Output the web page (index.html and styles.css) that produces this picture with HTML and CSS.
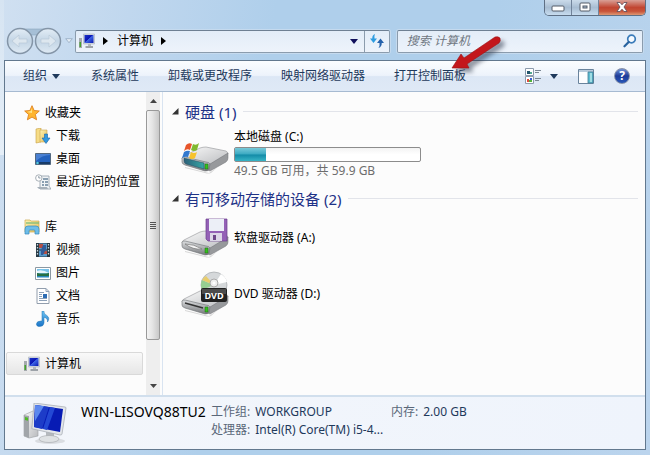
FILE: index.html
```html
<!DOCTYPE html>
<html lang="zh-CN">
<head>
<meta charset="utf-8">
<title>计算机</title>
<link rel="stylesheet" href="styles.css">
</head>
<body>
<svg class="defs" aria-hidden="true">
  <defs>
    <linearGradient id="screen" x1="0" y1="0" x2="1" y2="1">
      <stop offset="0" stop-color="#1a35c8"/><stop offset=".45" stop-color="#0a14b4"/><stop offset=".5" stop-color="#3f66e6"/><stop offset="1" stop-color="#0818b0"/>
    </linearGradient>
    <linearGradient id="metal" x1="0" y1="0" x2="1" y2="1">
      <stop offset="0" stop-color="#fafafa"/><stop offset="1" stop-color="#b9bbbe"/>
    </linearGradient>
    <linearGradient id="side" x1="0" y1="0" x2="0" y2="1">
      <stop offset="0" stop-color="#dcdee0"/><stop offset="1" stop-color="#77797c"/>
    </linearGradient>
    <linearGradient id="teal" x1="0" y1="0" x2="1" y2="0">
      <stop offset="0" stop-color="#2c5f78"/><stop offset="1" stop-color="#35a7a4"/>
    </linearGradient>
    <linearGradient id="folder" x1="0" y1="0" x2="1" y2="1">
      <stop offset="0" stop-color="#fdf3b4"/><stop offset="1" stop-color="#e5bd55"/>
    </linearGradient>
    <linearGradient id="blue" x1="0" y1="0" x2="0" y2="1">
      <stop offset="0" stop-color="#6cc3f2"/><stop offset="1" stop-color="#1b74c8"/>
    </linearGradient>
    <linearGradient id="orb" x1="0" y1="0" x2="0" y2="1">
      <stop offset="0" stop-color="#e3edf6"/><stop offset=".5" stop-color="#c3d5e5"/><stop offset="1" stop-color="#dfeaf4"/>
    </linearGradient>
    <symbol id="pc" viewBox="0 0 16 16">
      <path d="M0 5h3v10H0z" fill="#a5a9ae"/><path d="M.5 9H2v5H.5z" fill="#44a42c"/>
      <path d="M4.500 1h11v10h-11z" fill="#d8dde4" stroke="#a8b0ba" stroke-width=".6"/>
      <path d="M5.500 2h9v8h-9z" fill="url(#screen)"/>
      <path d="M9 11h3v2H9z" fill="#b3b8be"/><path d="M6.500 13h7.500v2H6.500z" fill="#9da2a8"/>
    </symbol>
    <symbol id="drive" viewBox="0 0 48 28">
      <path d="M4 21l24 6 19-13v-2L30 27q-3 1-6 0L4 22z" fill="#000" opacity=".15"/>
      <path d="M1 13q0-2 2-3L19 2q3-1 6-1l20 4q2 1 2 3L30 18q-2 1-5 1z" fill="url(#metal)" stroke="#909296" stroke-width=".6"/>
      <path d="M1 12q0-1 3-1l21 5q3 0 4 2v5q-1 2-5 2L4 19q-3-1-3-3z" fill="url(#side)" stroke="#6c6e72" stroke-width=".6"/>
      <path d="M29 18L47 7v5q0 2-2 4L29 25q-1 0-1-1z" fill="#97999c" stroke="#737579" stroke-width=".5"/>
      <path d="M24 18h3v5h-3z" fill="#35c01d" stroke="#1e6f14" stroke-width=".5"/>
    </symbol>
  </defs>
</svg>
<div class="window">
  <header class="chrome">
    <div class="caption">
      <button class="cap" aria-label="最小化"><svg width="14" height="7" viewBox="0 0 14 7"><rect x="1" y="1" width="12" height="5" rx="1" fill="#fff" stroke="#555c68"/></svg></button>
      <button class="cap" aria-label="最大化"><svg width="12" height="10" viewBox="0 0 12 10"><rect x="1" y="1" width="10" height="8" rx="1" fill="#fff" stroke="#555c68"/><rect x="4" y="4" width="4" height="2" fill="#a8bdd2" stroke="#555c68"/></svg></button>
      <button class="cap close" aria-label="关闭"><svg width="12" height="10" viewBox="0 0 12 10"><path d="M1 .500h3l2 2.300L8 .500h3L8 5l3 4.500H8L6 7.200 4 9.500H1l3-4.500z" fill="#fff" stroke="#5a4a55" stroke-width=".8"/></svg></button>
    </div>
    <div class="nav">
      <div class="orbs">
        <svg class="orbbg" width="56" height="28" viewBox="0 0 56 28">
          <path d="M14 2h28q-5 1-10 6h-8q-5-5-10-6z" fill="#a6bfd6" stroke="#8ba4bc" stroke-width=".6"/>
          <circle cx="14" cy="14" r="12.500" fill="url(#orb)" stroke="#8495a7" stroke-width="1.500"/><circle cx="42" cy="14" r="12.500" fill="url(#orb)" stroke="#8495a7" stroke-width="1.500"/>
          <path d="M6 14l7-6v4h8v4h-8v4zM50 14l-7-6v4h-8v4h8v4z" fill="#dde7ef" stroke="#b8c9d8" stroke-width=".7"/>
        </svg>
        <button class="orb" aria-label="后退"></button><button class="orb" aria-label="前进"></button>
      </div>
      <button class="recent" aria-label="最近页面"><svg width="8" height="6" viewBox="0 0 8 6"><path d="M.7.700h6.600L4 4.700z" fill="#e4edf5" stroke="#94aac0" stroke-width=".8"/></svg></button>
      <div class="address">
        <svg width="16" height="16"><use href="#pc"/></svg>
        <svg class="crumb" width="5" height="8" viewBox="0 0 5 8"><path d="M0 0l5 4-5 4z"/></svg>
        <a href="#">计算机</a>
        <svg class="crumb" width="5" height="8" viewBox="0 0 5 8"><path d="M0 0l5 4-5 4z"/></svg>
        <button class="drop" aria-label="历史记录"><svg width="8" height="5" viewBox="0 0 8 5"><path d="M0 0h8L4 5z" fill="#10105c"/></svg></button>
        <button class="refresh" aria-label="刷新"><svg width="16" height="14" viewBox="0 0 16 14"><path d="M6 0Q3 1 3.300 4.500H1L4.500 9 8 4.500H5.500Q5 2 6 0z" fill="#2d9ce0"/><path d="M9.500 14q3.500-1.500 3.200-5H15l-3.500-4.500L8 9h2.500q.5 3-1 5z" fill="#2562ac"/></svg></button>
      </div>
      <div class="search">
        <input type="text" aria-label="搜索 计算机" placeholder="搜索 计算机">
        <svg width="14" height="14" viewBox="0 0 14 14"><circle cx="8.500" cy="5" r="3.800" fill="#f5faff" stroke="#3b7cba" stroke-width="1.700"/><path d="M5.700 8L1.500 12.300" stroke="#28639f" stroke-width="2.200" stroke-linecap="round"/></svg>
      </div>
    </div>
  </header>
  <div class="client">
    <div class="toolbar" role="toolbar">
      <button class="org">组织<svg width="8" height="5" viewBox="0 0 8 5"><path d="M0 0h8L4 5z" fill="#1e395b"/></svg></button>
      <button>系统属性</button>
      <button>卸载或更改程序</button>
      <button>映射网络驱动器</button>
      <button class="panel">打开控制面板<svg class="pointer" width="60" height="42" viewBox="0 0 60 42" aria-hidden="true"><path d="M3 36L12 22l3 4L46 5q3-1 5 1 1 3-1 5L18 32l2 4z" fill="#c3171b" stroke="#9a1215" stroke-width=".6"/></svg></button>
      <div class="tools">
        <button class="view" aria-label="更改您的视图"><svg width="16" height="16" viewBox="0 0 16 16"><path d="M.5.500h8v7h-8zM.5 8.500h8v7h-8z" fill="#fff" stroke="#8c9bad"/><path d="M2 3h3v3H2z" fill="#22556c"/><path d="M5 4h2v2H5z" fill="#53a993"/><path d="M2 11h2v3H2z" fill="#e4483e"/><path d="M4 12h3v2H4z" fill="#50b23c"/><path d="M5 10h2v2H5z" fill="#3d60cd"/><path d="M10 2.500h6M10 4.500h4M10 10.500h6M10 12.500h4" stroke="#7a8794"/></svg><svg width="8" height="5" viewBox="0 0 8 5"><path d="M0 0h8L4 5z" fill="#1e395b"/></svg></button>
        <button aria-label="显示预览窗格"><svg width="16" height="15" viewBox="0 0 16 15"><path d="M.5.500h15v14H.5z" fill="#fcfdff" stroke="#69839c"/><path d="M1 1h14v2H1z" fill="#b9cbdc"/><path d="M10 3h5v11h-5z" fill="#5cbbd0" stroke="#437b94" stroke-width=".8"/><path d="M12 4h2v9h-2z" fill="#a0dde4"/></svg></button>
        <button class="help" aria-label="获取帮助">?</button>
      </div>
    </div>
    <div class="body">
      <nav class="sidebar">
        <ul>
          <li class="root"><svg width="16" height="16" viewBox="0 0 16 16"><path d="M8 .7l2.100 4.800 5.200.5-3.900 3.500 1.200 5.300L8 12.100l-4.600 2.700 1.200-5.300L.7 6l5.200-.5z" fill="#ffb52e" stroke="#df8220" stroke-width=".9"/><path d="M8 3v5L3 7l4-1z" fill="#ffe48b"/></svg><a href="#">收藏夹</a></li>
          <li><svg width="16" height="16" viewBox="0 0 16 16"><path d="M1 1l5-1v14l-5 1z" fill="#f6dc86" stroke="#c69e42" stroke-width=".6"/><path d="M5 2h7v12H5z" fill="url(#folder)" stroke="#cba650" stroke-width=".6"/><path d="M9.500 6h3v4H15l-4 5.500L7 10h2.500z" fill="#3199df" stroke="#1967ac" stroke-width=".6"/></svg><a href="#">下载</a></li>
          <li><svg width="16" height="16" viewBox="0 0 16 16"><path d="M.5 2.500h15v11H.5z" fill="#2462bd" stroke="#53687f"/><path d="M1 10Q7 4 15 4V3H1z" fill="#4a80d2"/><path d="M1 11h14v2H1z" fill="#173b68"/><circle cx="2.500" cy="12" r="1.300" fill="#53c7df"/></svg><a href="#">桌面</a></li>
          <li><svg width="16" height="16" viewBox="0 0 16 16"><path d="M5 2h9v10l2 3H5z" fill="#f1f4f6" stroke="#909da8" stroke-width=".8"/><path d="M8 5h5M7 8h2M10 8h3M7 11h2M10 11h3" stroke="#68839a" stroke-width="1.300"/><path d="M2 13h10l1 2H4z" fill="#a6b0b9"/><circle cx="3.800" cy="4" r="3.200" fill="#fff" stroke="#939da6" stroke-width=".8"/><path d="M3.800 2v2h1.700" fill="none" stroke="#637684" stroke-width=".7"/></svg><a href="#">最近访问的位置</a></li>
        </ul>
        <ul>
          <li class="root"><svg width="16" height="16" viewBox="0 0 16 16"><path d="M1 1h5l1 1h8v11H1z" fill="url(#folder)" stroke="#cca94e" stroke-width=".7"/><path d="M2 4h13" stroke="#74b877" stroke-width="1.200"/><path d="M1 15v-5q0-3 3-3h8q3 0 3 3v5h-4v-3q0-1-1-1H6q-1 0-1 1v3z" fill="#6dbde9" stroke="#368abd" stroke-width=".7"/></svg><a href="#">库</a></li>
          <li><svg width="16" height="16" viewBox="0 0 16 16"><path d="M1 1h14v14H1z" fill="#273844"/><path d="M4 1.500h8v6H4zM4 8.500h8v6H4z" fill="#5a9ccc"/><path d="M4 2h4v4H4zM8 9h4v3H8z" fill="#b44f45"/><path d="M8 3h3v4l-3 6H6V8z" fill="#315d9b"/><path d="M2.500 2v12M13.500 2v12" stroke="#c6d7dd" stroke-width="1.300" stroke-dasharray="1.500 1.500"/></svg><a href="#">视频</a></li>
          <li><svg width="16" height="16" viewBox="0 0 16 16"><path d="M.5 2.500h15v12H.5z" fill="#fff" stroke="#8b98a2"/><path d="M2 4h12v8H2z" fill="#78c2e9"/><path d="M2 6q5-2 12 2H2z" fill="#e6f5fb"/><path d="M2 8q6 1 12 0v4H2z" fill="#277044"/><path d="M2 11h12v1.500H2z" fill="#2a87bd"/></svg><a href="#">图片</a></li>
          <li><svg width="16" height="16" viewBox="0 0 16 16"><path d="M2 .5h9l3 3v12H2z" fill="#fff" stroke="#929ead"/><path d="M11 .5v3h3M4 4.500h5M4 6.500h3M4 8.500h3M4 10.500h8M4 12.500h8" fill="none" stroke="#8da1b8"/><path d="M8 6h4v4H8z" fill="#2c6cb4"/></svg><a href="#">文档</a></li>
          <li><svg width="16" height="16" viewBox="0 0 16 16"><path d="M7 0h1.800q0 3 3 4.500 3.500 2.500.7 6.500.7-3.500-3.500-4.800V12q-.5 3.500-4.400 3.500-3 0-3.200-2.300Q1.700 10 6 10h1z" fill="url(#blue)" stroke="#1c72b2" stroke-width=".5"/></svg><a href="#">音乐</a></li>
        </ul>
        <ul>
          <li class="root selected"><svg width="16" height="16"><use href="#pc"/></svg><a href="#">计算机</a></li>
        </ul>
      </nav>
      <div class="scroll">
        <button aria-label="向上滚动"><svg width="7" height="4" viewBox="0 0 7 4"><path d="M0 4h7L3.500 0z" fill="#444"/></svg></button>
        <div class="thumb"><i></i><i></i><i></i><i></i></div>
        <button aria-label="向下滚动"><svg width="7" height="4" viewBox="0 0 7 4"><path d="M0 0h7L3.500 4z" fill="#444"/></svg></button>
      </div>
      <main class="content">
        <section>
          <h2><svg width="7" height="7" viewBox="0 0 7 7"><path d="M6.500 0v6.500H0z" fill="#333"/></svg>硬盘 (1)</h2>
          <div class="item disk">
            <svg class="icon" width="48" height="34" viewBox="0 0 48 34"><use href="#drive" y="5" width="48" height="28"/><path d="M3 17l20 5v6L5 23q-2-1-2-3z" fill="url(#teal)" stroke="#24495c" stroke-width=".5"/><path d="M5 4q3-3 6-1L9 9Q6 7 3 10z" fill="#e7552b"/><path d="M12 3q3 2 6-1l-2 7q-3 2-6 0z" fill="#80b92f"/><path d="M3 11q3-2 6-1l-2 6q-3-1-6 1z" fill="#3379cf"/><path d="M10 11q3 2 6 0l-2 6q-3 2-6 0z" fill="#f7c32d"/></svg>
            <div class="info">
              <div class="name">本地磁盘 (C:)</div>
              <div class="bar" role="meter" aria-label="已用空间" aria-valuenow="17" aria-valuemin="0" aria-valuemax="100"><div class="used" style="width:17%"></div></div>
              <div class="free">49.5 GB 可用，共 59.9 GB</div>
            </div>
          </div>
        </section>
        <section>
          <h2><svg width="7" height="7" viewBox="0 0 7 7"><path d="M6.500 0v6.500H0z" fill="#333"/></svg>有可移动存储的设备 (2)</h2>
          <div class="item">
            <svg class="icon" width="48" height="42" viewBox="0 0 48 42"><use href="#drive" y="13" width="48" height="28"/><path d="M4 27q9 0 17 5-9 1-17-5z" fill="#f4f4f4" stroke="#777" stroke-width=".7"/><path d="M25 2h21v22H27l-2-2z" fill="#9461b6" stroke="#6b3c8c" stroke-width=".7"/><path d="M28 2h15v12H28z" fill="#eceff7"/><path d="M29 16h12v8H29z" fill="#dcd6e7"/><path d="M32 18h3v5h-3z" fill="#6e4789"/></svg>
            <div class="name">软盘驱动器 (A:)</div>
          </div>
          <div class="item">
            <svg class="icon" width="48" height="46" viewBox="0 0 48 46"><use href="#drive" y="18" width="48" height="28"/><path d="M4 32l18 5" stroke="#333" stroke-width="1.500"/><circle cx="33" cy="14" r="13" fill="#d5d8da" stroke="#a4a7aa" stroke-width=".7"/><path d="M33 14L21 9q-2 4 0 10z" fill="#96ce91"/><path d="M33 14L21 9q2-3 4-4z" fill="#e8cd6d"/><path d="M33 14l7-11q5 3 6 8z" fill="#fff"/><circle cx="33" cy="12" r="4" fill="#eee" stroke="#aaa"/><circle cx="33" cy="12" r="1.500" fill="#fff"/><rect x="20" y="17" width="26" height="14" rx="2" fill="#222"/><path d="M21 18h24v5H21z" fill="#4c4c4c"/><text class="dvd" x="33" y="28" text-anchor="middle">DVD</text></svg>
            <div class="name">DVD 驱动器 (D:)</div>
          </div>
        </section>
      </main>
    </div>
    <footer class="details">
      <svg class="bigpc" width="46" height="42" viewBox="0 0 46 42">
        <ellipse cx="27" cy="38" rx="15" ry="3" fill="#000" opacity=".1"/>
        <path d="M1 12l9-4 5 2v23L6 35l-5-2z" fill="url(#metal)" stroke="#9a9da1" stroke-width=".6"/><path d="M1 12l5 1v22l-5-2z" fill="#a1a5a9"/><path d="M2 14l3 .7v3L2 17z" fill="#4fbb25"/>
        <path d="M23 29l8 1v6h-8z" fill="#b5b9bd"/><ellipse cx="26" cy="36" rx="10" ry="3.500" fill="#dfe2e4" stroke="#a2a6aa" stroke-width=".6"/>
        <path d="M11 0l31 4q1 0 1 1l-4 26q0 1-2 1L10 26q-2 0-1-2z" fill="#e3e6ea" stroke="#a2a8af" stroke-width=".7"/>
        <path d="M12 2l28 4-3 23-26-5z" fill="#071bb4"/><path d="M12 2l14 2-7 22-8-2z" fill="#1d3cc8"/><path d="M12 2l9 1-9 15z" fill="#5c88ee"/><path d="M27 4l5 1-8 22-4-1z" fill="#2348d4"/>
      </svg>
      <div class="host">WIN-LISOVQ88TU2</div>
      <dl>
        <div class="pair"><dt>工作组:</dt><dd>WORKGROUP</dd></div>
        <div class="pair"><dt>内存:</dt><dd>2.00 GB</dd></div>
        <div class="pair"><dt>处理器:</dt><dd>Intel(R) Core(TM) i5-4...</dd></div>
      </dl>
    </footer>
  </div>
</div>
</body>
</html>
```
FILE: styles.css
```css
* { box-sizing: border-box; }
body {
  margin: 0;
  font: 12px/18px "Noto Sans", "Noto Sans CJK SC", sans-serif;
  color: #000;
}
button { border: 0; padding: 0; background: none; font: inherit; color: inherit; display: flex; align-items: center; justify-content: center; }
a { color: inherit; text-decoration: none; }
ul, dl, dd, h2 { margin: 0; padding: 0; list-style: none; }
svg { display: block; flex: none; }
.defs { position: absolute; width: 0; height: 0; }

.window {
  min-height: 100vh;
  display: flex;
  flex-direction: column;
  padding: 0 4px 5px;
  background:
    linear-gradient(#d6e4f2, #e6eff8) no-repeat 0 0 / 4px 155px,
    linear-gradient(100deg, #d0e0f1 0, #c0d7ee 18%, #afcfeb 38%, #afcfeb 68%, #bbd4ed 100%);
}
.caption {
  display: flex;
  width: 102px;
  height: 16px;
  margin-left: auto;
  border: 1px solid #5e6f84;
  border-top: 0;
  border-radius: 0 0 5px 5px;
  overflow: hidden;
}
.cap { width: 27px; padding-bottom: 2px; background: linear-gradient(#cbdbea, #a8bdd2 50%, #c7dcef); border-right: 1px solid #71839a; }
.cap:first-child { padding: 2px 0 0; }
.close { flex: 1; border: 0; background: linear-gradient(#d9a096, #c14632 50%, #c85439 75%, #dd9873); }

.nav { display: flex; align-items: center; height: 44px; padding: 7px 0 1px 2px; }
.orbs { position: relative; display: flex; width: 56px; height: 28px; }
.orbbg { position: absolute; left: 0; top: 0; }
.orb { position: relative; width: 28px; height: 28px; border-radius: 14px; }
.recent { width: 13px; }
.address, .search {
  display: flex;
  align-items: center;
  height: 23px;
  border: 1px solid #8b9cad;
  border-top-color: #6e8093;
  border-radius: 2px;
  background: linear-gradient(#e3edf8, #edf3fb);
  box-shadow: 0 0 0 1px #c5daee;
}
.address { flex: 323; padding-left: 3px; }
.crumb { margin: 0 9px 0 8px; }
.drop { margin-left: auto; width: 20px; height: 21px; }
.refresh { width: 25px; height: 21px; border-left: 1px solid #8b9cad; }
.search { flex: 240; margin: 0 3px 0 7px; padding: 0 5px 0 9px; }
.search input { flex: 1; min-width: 0; border: 0; padding: 0; outline: 0; background: none; font: inherit; }
.search input::placeholder { color: #6f7781; font-style: italic; opacity: 1; }

.client { flex: 1; display: flex; flex-direction: column; border: 1px solid #62788e; background: #fcfcfc; }
.toolbar {
  display: flex;
  align-items: center;
  gap: 29px;
  height: 31px;
  padding: 0 15px 0 18px;
  border-bottom: 1px solid #a6bad1;
  background: linear-gradient(#fbfdff 0, #edf3fb 48%, #dce7f5 52%, #dfe9f6 100%);
  color: #1e395b;
  white-space: nowrap;
}
.org { gap: 5px; padding-right: 2px; }
.panel { position: relative; }
.pointer { position: absolute; left: 55px; top: -35px; z-index: 2; filter: drop-shadow(4px 4px 2px rgba(40, 50, 70, .5)); }
.tools { display: flex; align-items: center; gap: 20px; margin-left: auto; }
.view { gap: 9px; }
.help {
  width: 16px;
  height: 16px;
  border: 1px solid #8690a8;
  border-radius: 8px;
  background: linear-gradient(#7091d6, #1d3b98 50%, #2857b8);
  color: #fff;
  font-size: 12px;
  font-weight: 700;
}

.body { flex: 1; display: flex; }
.sidebar { width: 141px; padding: 9px 3px 0 1px; display: flex; flex-direction: column; gap: 22px; white-space: nowrap; }
.sidebar li { display: flex; align-items: center; gap: 5px; height: 23px; padding-left: 29px; }
.sidebar .root { padding-left: 18px; }
.sidebar .selected { border: 1px solid #d9d9d9; border-radius: 2px; background: linear-gradient(#f9f9f9, #e6e6e6); padding-left: 17px; }
.scroll { width: 17px; padding-right: 2px; border-right: 1px solid #d9e4f1; display: flex; flex-direction: column; background: linear-gradient(90deg, #eee 14px, #fcfcfc 14px); }
.scroll button { width: 14px; height: 18px; }
.thumb {
  width: 14px;
  height: 230px;
  border: 1px solid #999;
  border-radius: 2px;
  background: linear-gradient(90deg, #f4f4f4, #e4e4e4 45%, #c8c8c8);
  display: flex;
  flex-direction: column;
  align-items: center;
  justify-content: center;
  gap: 1px;
}
.thumb i { width: 6px; height: 1px; background: #555; }
.scroll button:last-child { margin-top: auto; }

.content { flex: 1; min-width: 0; padding: 8px 7px 0 9px; }
h2 { display: flex; align-items: center; height: 23px; font-size: 15px; font-weight: 400; color: #1e3287; white-space: nowrap; }
h2 svg { margin-right: 6px; }
h2::after { content: ""; flex: 1; height: 1px; margin-left: 7px; background: #e2e4ea; }
.item { display: flex; align-items: center; gap: 5px; height: 56px; padding-left: 9px; }
.disk { height: 64px; padding-top: 2px; align-items: flex-start; }
.disk .icon { margin-top: 16px; }
.info { width: 187px; padding-top: 3px; }
.bar { height: 15px; margin-top: 1px; border: 1px solid #8c8c8c; border-radius: 2px; background: linear-gradient(#f3f3f3, #fff 50%); }
.used { height: 13px; background: linear-gradient(#77c9d9, #3aa9c1 48%, #128aa6 52%, #37b4c6); }
.free { color: #6d6d6d; }
.dvd { font: 700 9px "Open Sans", sans-serif; fill: #fff; }

.details {
  display: flex;
  align-items: flex-start;
  height: 54px;
  padding: 6px 0 0 18px;
  border-top: 2px solid #d1dfed;
  background: linear-gradient(90deg, #f3f6fb, #eff4fc);
  white-space: nowrap;
}
.host { margin-left: 12px; font-size: 14px; line-height: 18px; width: 130px; }
.details dl { display: grid; grid-template-columns: 180px auto; color: #1e395b; }
.pair { display: flex; gap: 5px; }
.pair dt { color: #5a6779; }
```
